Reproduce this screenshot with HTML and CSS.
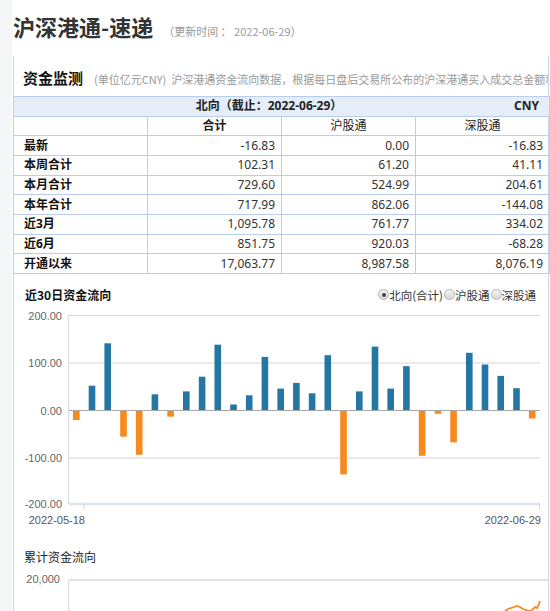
FILE: index.html
```html
<!DOCTYPE html>
<html lang="zh-CN">
<head>
<meta charset="utf-8">
<title>沪深港通-速递</title>
<link rel="stylesheet" href="styles.css">
</head>
<body>
<div class="page">
  <div class="hd">
    <h1 class="title">沪深港通-速递</h1>
    <span class="update">（更新时间 ： 2022-06-29）</span>
  </div>
  <div class="panel">
    <div class="sec-hd">
      <h2 class="sec-title">资金监测</h2>
      <span class="sec-desc">(单位亿元CNY)&nbsp;&nbsp;沪深港通资金流向数据，根据每日盘后交易所公布的沪深港通买入成交总金额和卖出成交总金额计算得出。</span>
    </div>
    <table class="tbl">
      <colgroup><col class="c"><col class="c"><col class="c"><col class="c"></colgroup>
      <tr class="top"><td colspan="4"><span class="cny">CNY</span>北向（截止：2022-06-29）</td></tr>
      <tr class="colhd"><td></td><td class="b">合计</td><td>沪股通</td><td>深股通</td></tr>
      <tr><th>最新</th><td>-16.83</td><td>0.00</td><td>-16.83</td></tr>
      <tr><th>本周合计</th><td>102.31</td><td>61.20</td><td>41.11</td></tr>
      <tr><th>本月合计</th><td>729.60</td><td>524.99</td><td>204.61</td></tr>
      <tr><th>本年合计</th><td>717.99</td><td>862.06</td><td>-144.08</td></tr>
      <tr><th>近3月</th><td>1,095.78</td><td>761.77</td><td>334.02</td></tr>
      <tr><th>近6月</th><td>851.75</td><td>920.03</td><td>-68.28</td></tr>
      <tr><th>开通以来</th><td>17,063.77</td><td>8,987.58</td><td>8,076.19</td></tr>
    </table>
    <div class="chart-hd">
      <h3 class="chart-title">近30日资金流向</h3>
      <div class="radios">
        <span class="radio on"></span><span class="rlabel">北向(合计)</span>
        <span class="radio"></span><span class="rlabel">沪股通</span>
        <span class="radio"></span><span class="rlabel">深股通</span>
      </div>
    </div>
    <svg class="chart" width="534" height="232" viewBox="0 0 534 232">
      <g stroke="#d6d6d6" stroke-width="1">
        <line x1="55" y1="9.5" x2="526" y2="9.5"/>
        <line x1="55" y1="57" x2="526" y2="57"/>
        <line x1="55" y1="152" x2="526" y2="152"/>
      </g>
      <line x1="54.5" y1="9" x2="54.5" y2="198" stroke="#dde2e8" stroke-width="1.5"/>
      <line x1="55" y1="198" x2="526" y2="198" stroke="#dfe5ed" stroke-width="2.5"/>
      <line x1="70" y1="197" x2="70" y2="203" stroke="#cfd6de" stroke-width="1"/>
      <line x1="525.5" y1="197" x2="525.5" y2="203" stroke="#cfd6de" stroke-width="1"/>
      <g class="ylab" text-anchor="end">
        <text x="48" y="13.5">200.00</text>
        <text x="48" y="61">100.00</text>
        <text x="48" y="108.5">0.00</text>
        <text x="48" y="156">-100.00</text>
        <text x="48" y="202">-200.00</text>
      </g>
      <g class="xlab" text-anchor="end">
        <text x="71" y="218">2022-05-18</text>
        <text x="527" y="218">2022-06-29</text>
      </g>
      <g fill="#2476a3">
        <rect x="74.7" y="79.7" width="6.6" height="24.8"/>
        <rect x="90.4" y="37.3" width="6.6" height="67.2"/>
        <rect x="137.6" y="88.3" width="6.6" height="16.2"/>
        <rect x="169.0" y="85.4" width="6.6" height="19.1"/>
        <rect x="184.8" y="70.7" width="6.6" height="33.8"/>
        <rect x="200.5" y="38.7" width="6.6" height="65.8"/>
        <rect x="216.2" y="98.5" width="6.6" height="6.0"/>
        <rect x="231.9" y="89.3" width="6.6" height="15.2"/>
        <rect x="247.6" y="50.9" width="6.6" height="53.6"/>
        <rect x="263.4" y="82.6" width="6.6" height="21.9"/>
        <rect x="279.1" y="76.9" width="6.6" height="27.6"/>
        <rect x="294.8" y="87.3" width="6.6" height="17.2"/>
        <rect x="310.5" y="49.2" width="6.6" height="55.3"/>
        <rect x="342.0" y="85.4" width="6.6" height="19.1"/>
        <rect x="357.7" y="40.6" width="6.6" height="63.9"/>
        <rect x="373.4" y="82.6" width="6.6" height="21.9"/>
        <rect x="389.1" y="60.2" width="6.6" height="44.3"/>
        <rect x="452.0" y="46.8" width="6.6" height="57.7"/>
        <rect x="467.7" y="58.5" width="6.6" height="46.0"/>
        <rect x="483.4" y="69.9" width="6.6" height="34.6"/>
        <rect x="499.2" y="82.2" width="6.6" height="22.3"/>
      </g>
      <g fill="#f7891f">
        <rect x="59.0" y="104.5" width="6.6" height="9.5"/>
        <rect x="106.2" y="104.5" width="6.6" height="26.2"/>
        <rect x="121.9" y="104.5" width="6.6" height="44.3"/>
        <rect x="153.3" y="104.5" width="6.6" height="6.2"/>
        <rect x="326.2" y="104.5" width="6.6" height="63.9"/>
        <rect x="404.8" y="104.5" width="6.6" height="45.3"/>
        <rect x="420.6" y="104.5" width="6.6" height="3.3"/>
        <rect x="436.3" y="104.5" width="6.6" height="31.9"/>
        <rect x="514.9" y="104.5" width="6.6" height="8.0"/>
      </g>
      <line x1="55" y1="104.5" x2="526" y2="104.5" stroke="#a8a8a8" stroke-width="1"/>
    </svg>
    <div class="chart2-hd">
      <h3 class="chart2-title">累计资金流向</h3>
    </div>
    <svg class="chart2" width="534" height="60" viewBox="0 0 534 60">
      <line x1="55" y1="13" x2="534" y2="13" stroke="#dfe3e8" stroke-width="2"/>
      <line x1="54.5" y1="13" x2="54.5" y2="60" stroke="#dfe3e8" stroke-width="1.5"/>
      <text class="ylab" x="46" y="16" text-anchor="end">20,000</text>
      <path d="M491 44 L494 42 L497 41 L500 40 L503 39 L506 40 L509 42 L512 43 L515 44 L518 43 L521 40 L523 41 L525 37 L526 34" fill="none" stroke="#f7891f" stroke-width="1.8"/>
    </svg>
  </div>
</div>
</body>
</html>
```
FILE: styles.css
```css
html, body {
  margin: 0;
  padding: 0;
}
body {
  background: #f5f6f8;
  width: 550px;
  height: 611px;
  overflow: hidden;
  font-family: "Noto Sans", "Noto Sans CJK SC", sans-serif;
  color: #333;
}
.page {
  margin-left: 12px;
  width: 538px;
  background: #fff;
  min-height: 611px;
}
.hd {
  height: 56px;
  display: flex;
  align-items: center;
  padding-left: 1px;
}
.title {
  margin: 0;
  font-family: "Noto Sans CJK SC", sans-serif;
  font-size: 22px;
  line-height: 30px;
  font-weight: bold;
  color: #333;
  position: relative;
  top: -2px;
}
.update {
  margin-left: 10px;
  font-family: "Noto Sans CJK SC", sans-serif;
  font-size: 11px;
  color: #999;
  position: relative;
  top: 3px;
}
.panel {
  margin-left: 1px;
  width: 534px;
  border-left: 1px solid #c6d7f1;
  border-right: 1px solid #c6d7f1;
  min-height: 555px;
}
.sec-hd {
  height: 40px;
  padding: 12px 0 0 9px;
  box-sizing: border-box;
  display: flex;
  align-items: baseline;
  white-space: nowrap;
  overflow: hidden;
}
.sec-title {
  margin: 0;
  font-family: "Noto Sans CJK SC", sans-serif;
  font-size: 15px;
  line-height: 20px;
  font-weight: bold;
  color: #111;
}
.sec-desc {
  margin-left: 11px;
  font-family: "Noto Sans CJK SC", sans-serif;
  font-size: 11px;
  color: #999;
}
.tbl {
  margin-left: -1px;
  width: 536px;
  border-collapse: collapse;
  table-layout: fixed;
  font-size: 12px;
}
.tbl .c {
  width: 134px;
}
.tbl td, .tbl th {
  border: 1px solid #b9cdef;
  height: 18.67px;
  line-height: 18px;
  padding: 0 6px 0 10px;
  text-align: right;
  white-space: nowrap;
}
.tbl th {
  text-align: left;
  font-weight: bold;
  color: #111;
}
.tbl .top td {
  background: #e5edf9;
  text-align: center;
  font-weight: bold;
  color: #222;
}
.cny {
  float: right;
  margin-right: 4px;
}
.tbl .colhd td {
  text-align: center;
  padding: 0;
  color: #222;
}
.tbl .colhd .b {
  font-weight: bold;
}
.chart-hd {
  margin-top: 10px;
  height: 22px;
  padding: 0 12px 0 11px;
  display: flex;
  align-items: center;
  justify-content: space-between;
}
.chart-title {
  margin: 0;
  font-family: "Noto Sans CJK SC", sans-serif;
  font-size: 12px;
  font-weight: bold;
  color: #111;
}
.radios {
  display: flex;
  align-items: center;
  font-family: "Noto Sans CJK SC", sans-serif;
  font-size: 11.5px;
  color: #333;
}
.radio {
  width: 9px;
  height: 9px;
  border-radius: 50%;
  border: 1px solid #b5b5b5;
  background: linear-gradient(#f4f4f4, #d8d8d8);
  position: relative;
  margin-left: 1px;
}
.radio.on::after {
  content: "";
  position: absolute;
  left: 2.5px;
  top: 2.5px;
  width: 4px;
  height: 4px;
  border-radius: 50%;
  background: #444;
}
.rlabel {
  margin-left: 0;
}
.chart {
  display: block;
}
.ylab text, text.ylab {
  font-family: "Liberation Sans", sans-serif;
  font-size: 11px;
  fill: #666;
}
.xlab text {
  font-family: "Liberation Sans", sans-serif;
  font-size: 11px;
  fill: #555;
}
.chart2-hd {
  margin-top: 9px;
  height: 20px;
  padding-left: 10px;
  display: flex;
  align-items: center;
}
.chart2-title {
  margin: 0;
  font-family: "Noto Sans CJK SC", sans-serif;
  font-size: 12px;
  font-weight: normal;
  color: #222;
}
.chart2 {
  display: block;
}
```
